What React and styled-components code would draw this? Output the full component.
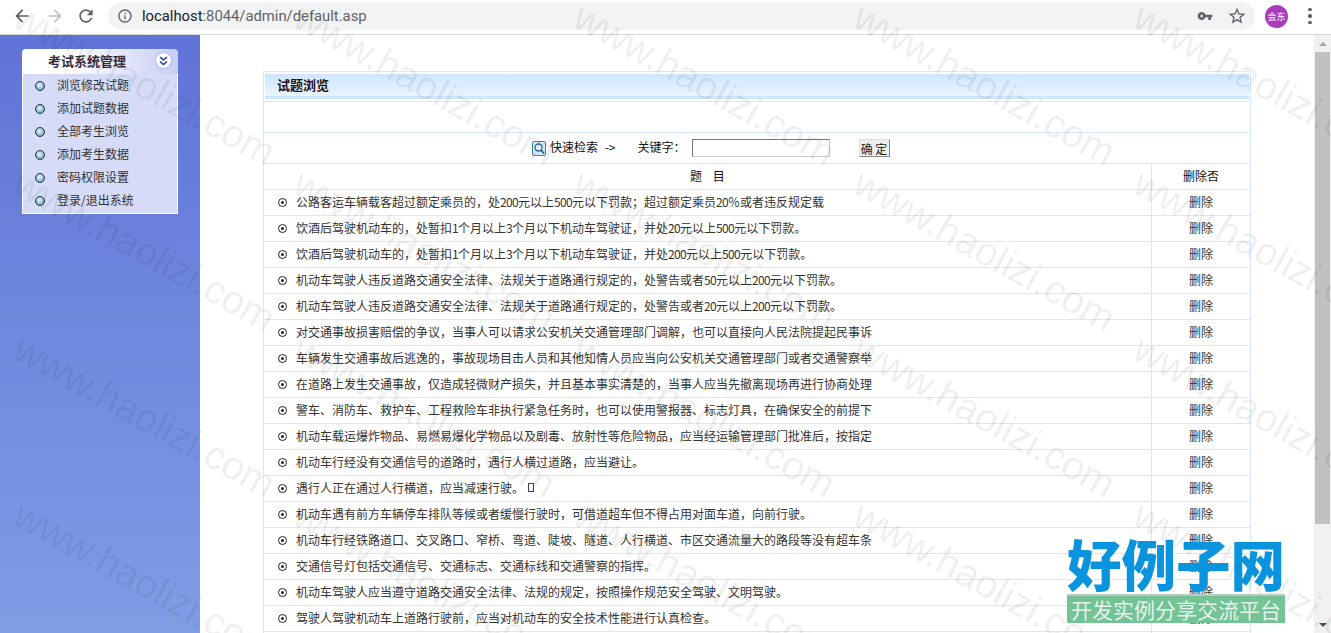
import React from "react";
import styled, { createGlobalStyle } from "styled-components";

const Global = createGlobalStyle`
  html, body { margin: 0; padding: 0; height: 633px; overflow: hidden; background: #fff; }
  * { box-sizing: border-box; }
  #root { height: 633px; }
`;
const Page = styled.div`
  position: relative; width: 1331px; height: 633px; overflow: hidden;
  display: flex; flex-direction: column;
  font: 12px/16px "Noto Sans CJK SC", sans-serif; color: #333;
`;
/* browser chrome */
const Chrome = styled.header`
  flex: 0 0 35px; display: flex; align-items: center; background: #fff;
  border-bottom: 1px solid #d8d8d8; padding: 0 0 2px 12px;
`;
const NavIcon = styled.svg`
  width: 20px; height: 20px; flex: none; fill: ${p => p.$fill || "#5f6368"}; margin-right: ${p => p.$gap || 0}px;
`;
const Address = styled.div`
  width: 1147px; height: 28px; margin-left: 12px; border-radius: 14px; background: #f1f3f4;
  display: flex; align-items: center; padding: 0 8px 0 9px;
`;
const Url = styled.div`
  flex: 1; margin-left: 9px; font: 14.8px/28px Roboto, sans-serif; color: #5f6368; white-space: nowrap;
  b { font-weight: 400; color: #202124; }
`;
const Avatar = styled.div`
  width: 23px; height: 23px; border-radius: 50%; background: #ab3cba; color: #fff; flex: none;
  font-size: 9px; line-height: 23px; text-align: center; margin-left: 10px;
`;
const Dots = styled.div`
  display: grid; gap: 3px; margin-left: 20px;
  i { width: 3.5px; height: 3.5px; border-radius: 50%; background: #5f6368; display: block; }
`;
/* body */
const Body = styled.div`flex: 1; display: flex; min-height: 0;`;
const Side = styled.aside`
  flex: 0 0 200px; padding: 14px 22px 0; background: linear-gradient(#6173d7, #7f9de5);
`;
const MenuHead = styled.div`
  height: 25px; border-radius: 4px 4px 0 0; display: flex; align-items: center; justify-content: space-between;
  padding: 0 7px 2px 26px; background: linear-gradient(90deg, #fff 30%, #c6cef3);
  font-size: 13px; font-weight: 700; color: #3a2b3b;
`;
const Toggle = styled.div`
  width: 15px; height: 15px; border-radius: 50%; background: #fff; box-shadow: 0 0 2px #7f8bd0;
  display: flex; align-items: center; justify-content: center;
`;
const MenuList = styled.ul`
  margin: 0; padding: 0 0 1px; list-style: none; background: #d6dcf7;
  border: 1px solid #fff; border-top: 0;
`;
const MenuItem = styled.li`
  height: 23px; display: flex; align-items: center; padding: 0 0 2px 12px; gap: 12px; color: #333;
`;
const Ball = styled.span`
  width: 10px; height: 10px; border-radius: 50%; flex: none; border: 1px solid #1f3546; margin-top: 2px;
  background: radial-gradient(circle at 45% 40%, #eef7fa, #7fb2c8 65%);
`;
const Main = styled.main`flex: 1; padding: 36px 0 0 63px; min-width: 0; overflow: hidden;`;
const Panel = styled.section`
  width: 988px; border: 1px solid #d4eafc; border-bottom: 0;
`;
const Title = styled.h2`
  margin: 2px 1px 0 1px; height: 25px; padding: 0 0 3px 12px; font-size: 13px; line-height: 22px; font-weight: 700; color: #251018;
  background: linear-gradient(#cde6fc, #e9f4fe) top / 100% 22px no-repeat, #cfe7fb;
`;
const Spacer = styled.div`
  height: 31px; margin-top: 2px; border-top: 1px solid #d4eafc;
`;
const Search = styled.form`
  height: 31px; margin: 0; border-top: 1px solid #d4eafc; display: flex; align-items: center;
  padding: 0 0 2px 268px; color: #111;
`;
const Lens = styled.svg`width: 14px; height: 15px; flex: none; margin: 2px 4px 0 0;`;
const Jump = styled.span`word-spacing: 4px;`;
const Keyword = styled.span`margin-left: 22px;`;
const Input = styled.input`
  width: 138px; height: 18px; margin: 1px 0 0 6px; padding: 0; background: #fff;
  border: 1px solid; border-color: #767676 #c8c8c8 #c8c8c8 #767676;
`;
const Submit = styled.button`
  width: 31px; height: 18px; margin: 2px 0 0 29px; padding: 0; font: 12px/15px "Noto Sans CJK SC", sans-serif; color: #222;
  background: #eee; border: 1px solid; border-color: #ddd #888 #888 #ddd;
`;
const Row = styled.div`
  height: 26px; display: grid; grid-template-columns: 887px 1fr; border-top: 1px solid #d4eafc;
  line-height: 24px; color: ${p => (p.$head ? "#111" : "#333")};
`;
const Cell = styled.div`
  display: flex; align-items: center; white-space: nowrap; overflow: hidden;
  padding: 0 0 2px ${p => (p.$center ? 0 : 14)}px;
  justify-content: ${p => (p.$center ? "center" : "flex-start")};
  & + & { border-left: 1px solid #d4eafc; }
`;
const Bullet = styled.span`
  width: 9px; height: 9px; flex: none; margin: 2px 9px 0 0; border-radius: 50%; border: 1px solid #222; position: relative;
  &::after { content: ""; position: absolute; inset: 2px; border-radius: 50%; background: #222; }
`;
const Num = styled.span`letter-spacing: -0.66px;`;
const Glyph = styled.span`
  display: inline-block; width: 6px; height: 9px; margin-left: 4px; border: 1px solid #2a3f9a; background: #fff;
`;
/* watermark + logo overlays */
const Mark = styled.div`
  position: absolute; font: 39.5px/44px "Liberation Sans", sans-serif; color: rgba(0,0,0,.07);
  transform: rotate(29deg); transform-origin: 0 0; white-space: nowrap; pointer-events: none;
`;
const Logo = styled.div`
  position: absolute; left: 1067px; top: 534px; width: 218px; pointer-events: none;
`;
const LogoName = styled.div`
  height: 60px; font: 900 54.5px/58px "Noto Sans CJK SC", sans-serif; color: #0a94de; white-space: nowrap;
`;
const LogoBand = styled.div`
  height: 29px; background: #74c396; border-top: 2px solid #b9c9bd; color: #e6f3ea; text-align: center;
  font: 400 21px/26px "Noto Sans CJK SC", sans-serif; white-space: nowrap;
`;
/* scrollbar */
const Bar = styled.div`
  flex: 0 0 17px; background: #f1f1f1; display: flex; flex-direction: column; align-items: center;
`;
const Arrow = styled.div`
  flex: 0 0 17px; display: flex; align-items: center; justify-content: center;
  &::after { content: ""; border-left: 4px solid transparent; border-right: 4px solid transparent;
    ${p => (p.$down ? "border-top: 4px solid #505050;" : "border-bottom: 4px solid #a3a3a3;")} }
`;
const Thumb = styled.div`width: 15px; height: 472px; background: #c1c1c1; margin-bottom: auto;`;

const menu = ["浏览修改试题", "添加试题数据", "全部考生浏览", "添加考生数据", "密码权限设置", "登录/退出系统"];
const rows = [
  "公路客运车辆载客超过额定乘员的，处200元以上500元以下罚款；超过额定乘员20％或者违反规定载",
  "饮酒后驾驶机动车的，处暂扣1个月以上3个月以下机动车驾驶证，并处20元以上500元以下罚款。",
  "饮酒后驾驶机动车的，处暂扣1个月以上3个月以下机动车驾驶证，并处200元以上500元以下罚款。",
  "机动车驾驶人违反道路交通安全法律、法规关于道路通行规定的，处警告或者50元以上200元以下罚款。",
  "机动车驾驶人违反道路交通安全法律、法规关于道路通行规定的，处警告或者20元以上200元以下罚款。",
  "对交通事故损害赔偿的争议，当事人可以请求公安机关交通管理部门调解，也可以直接向人民法院提起民事诉",
  "车辆发生交通事故后逃逸的，事故现场目击人员和其他知情人员应当向公安机关交通管理部门或者交通警察举",
  "在道路上发生交通事故，仅造成轻微财产损失，并且基本事实清楚的，当事人应当先撤离现场再进行协商处理",
  "警车、消防车、救护车、工程救险车非执行紧急任务时，也可以使用警报器、标志灯具，在确保安全的前提下",
  "机动车载运爆炸物品、易燃易爆化学物品以及剧毒、放射性等危险物品，应当经运输管理部门批准后，按指定",
  "机动车行经没有交通信号的道路时，遇行人横过道路，应当避让。",
  "遇行人正在通过人行横道，应当减速行驶。",
  "机动车遇有前方车辆停车排队等候或者缓慢行驶时，可借道超车但不得占用对面车道，向前行驶。",
  "机动车行经铁路道口、交叉路口、窄桥、弯道、陡坡、隧道、人行横道、市区交通流量大的路段等没有超车条",
  "交通信号灯包括交通信号、交通标志、交通标线和交通警察的指挥。",
  "机动车驾驶人应当遵守道路交通安全法律、法规的规定，按照操作规范安全驾驶、文明驾驶。",
  "驾驶人驾驶机动车上道路行驶前，应当对机动车的安全技术性能进行认真检查。",
];
const ICON = {
  arrow: "M20 11H7.83l5.59-5.59L12 4l-8 8 8 8 1.41-1.41L7.83 13H20v-2z",
  reload: "M17.65 6.35C16.2 4.9 14.21 4 12 4c-4.42 0-7.99 3.58-7.99 8s3.57 8 7.99 8c3.73 0 6.84-2.55 7.73-6h-2.08c-.82 2.33-3.04 4-5.65 4-3.31 0-6-2.69-6-6s2.69-6 6-6c1.66 0 3.14.69 4.22 1.78L13 11h7V4l-2.35 2.35z",
  info: "M11 7h2v2h-2zm0 4h2v6h-2zm1-9C6.48 2 2 6.48 2 12s4.48 10 10 10 10-4.48 10-10S17.52 2 12 2zm0 18c-4.41 0-8-3.59-8-8s3.59-8 8-8 8 3.59 8 8-3.59 8-8 8z",
  key: "M12.65 10C11.83 7.67 9.61 6 7 6c-3.31 0-6 2.69-6 6s2.69 6 6 6c2.61 0 4.83-1.67 5.65-4H17v4h4v-4h2v-4H12.65zM7 14c-1.1 0-2-.9-2-2s.9-2 2-2 2 .9 2 2-.9 2-2 2z",
  star: "M22 9.24l-7.19-.62L12 2 9.19 8.63 2 9.24l5.46 4.73L5.82 21 12 17.27 18.18 21l-1.63-7.03L22 9.24zM12 15.4l-3.76 2.27 1-4.28-3.32-2.88 4.38-.38L12 6.1l1.71 4.04 4.38.38-3.32 2.88 1 4.28L12 15.4z",
};
const Icon = ({ d, flip, ...p }) => (
  <NavIcon viewBox="0 0 24 24" {...p}><path d={d} transform={flip ? "matrix(-1 0 0 1 24 0)" : undefined} /></NavIcon>
);
const withNums = t => t.split(/(\d+)/).map((s, i) => (i % 2 ? <Num key={i}>{s}</Num> : s));
const marks = [];
for (let r = 0; r < 4; r++) for (let c = 0; c < 5; c++) marks.push({ x: 28 + 280 * c, y: -6 + 166 * r });

export default function App() {
  return (
    <Page lang="zh-CN">
      <Global />
      <Chrome>
        <Icon d={ICON.arrow} $gap={13} />
        <Icon d={ICON.arrow} flip $fill="#bcbfc3" $gap={11} />
        <Icon d={ICON.reload} />
        <Address>
          <Icon d={ICON.info} style={{ width: 16, height: 16 }} />
          <Url><b>localhost</b>:8044/admin/default.asp</Url>
          <Icon d={ICON.key} $gap={14} style={{ width: 16, height: 16 }} />
          <Icon d={ICON.star} />
        </Address>
        <Avatar>会东</Avatar>
        <Dots><i /><i /><i /></Dots>
      </Chrome>
      <Body>
        <Side>
          <MenuHead>
            考试系统管理
            <Toggle>
              <svg width="9" height="10" viewBox="0 0 9 10" fill="none" stroke="#1c3fa8" strokeWidth="1.6">
                <path d="M1 1l3.5 3L8 1M1 5.5l3.5 3 3.5-3" />
              </svg>
            </Toggle>
          </MenuHead>
          <MenuList>
            {menu.map(m => <MenuItem key={m}><Ball />{m}</MenuItem>)}
          </MenuList>
        </Side>
        <Main>
          <Panel>
            <Title>试题浏览</Title>
            <Spacer />
            <Search onSubmit={e => e.preventDefault()}>
              <Lens viewBox="0 0 14 15">
                <rect x="0.5" y="0.5" width="13" height="14" rx="1.5" fill="#d5e8f4" stroke="#3f83ad" />
                <circle cx="6.5" cy="6.5" r="3.5" fill="#f4fbff" stroke="#2b6f9c" strokeWidth="1.4" />
                <path d="M9 9l3 3.5" stroke="#234f73" strokeWidth="1.6" />
              </Lens>
              <Jump>快速检索 -&gt;</Jump>
              <Keyword>关键字：</Keyword>
              <Input />
              <Submit type="submit">确 定</Submit>
            </Search>
            <Row $head>
              <Cell $center>题&nbsp;&nbsp;&nbsp;&nbsp;目</Cell>
              <Cell $center>删除否</Cell>
            </Row>
            {rows.map((t, i) => (
              <Row key={i}>
                <Cell><Bullet />{withNums(t)}{i === 11 && <Glyph />}</Cell>
                <Cell $center>删除</Cell>
              </Row>
            ))}
            <Row><Cell /><Cell $center /></Row>
          </Panel>
        </Main>
        <Bar>
          <Arrow />
          <Thumb />
          <Arrow $down />
        </Bar>
      </Body>
      {marks.map((m, i) => (
        <Mark key={i} style={{ left: m.x, top: m.y }}>www.haolizi.com</Mark>
      ))}
      <Logo>
        <LogoName>好例子网</LogoName>
        <LogoBand>开发实例分享交流平台</LogoBand>
      </Logo>
    </Page>
  );
}
